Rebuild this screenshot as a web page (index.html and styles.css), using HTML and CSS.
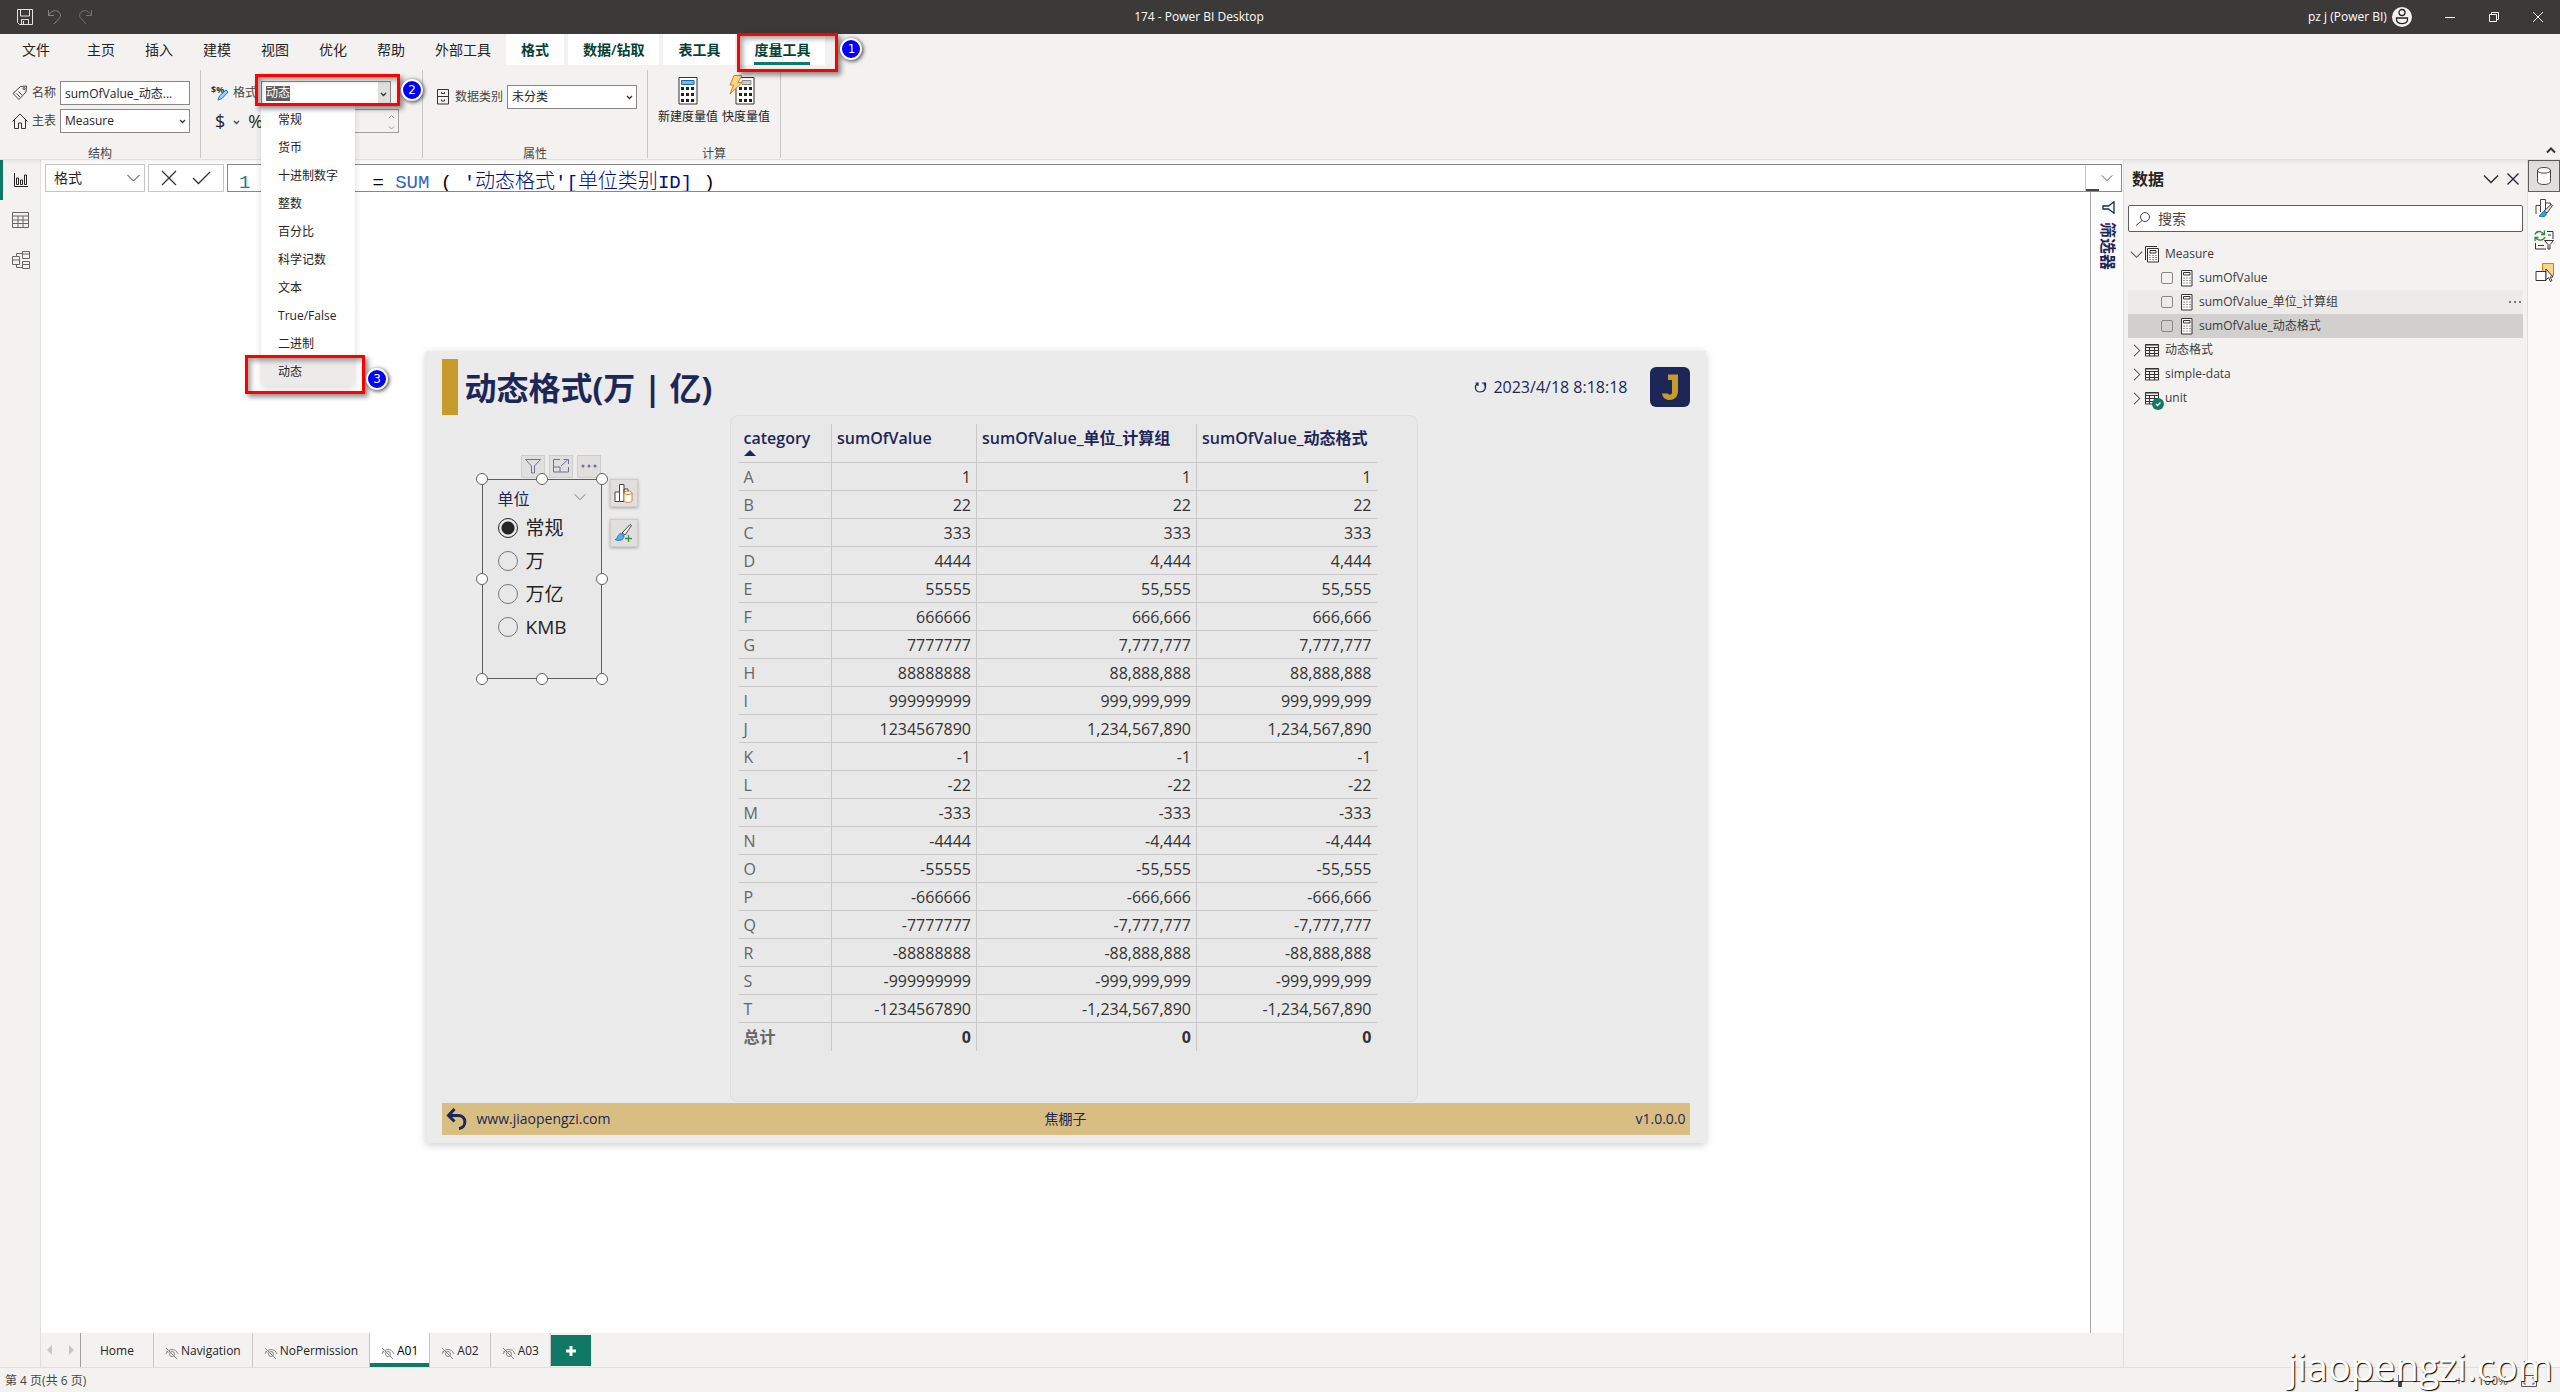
FILE: index.html
```html
<!DOCTYPE html>
<html lang="zh-CN">
<head>
<meta charset="utf-8">
<meta name="viewport" content="width=device-width, initial-scale=1">
<title>174 - Power BI Desktop</title>
<link rel="stylesheet" href="styles.css">
</head>
<body>
<svg class="defs" width="0" height="0" aria-hidden="true">
  <symbol id="chev-down" viewBox="0 0 16 16"><path d="M1 4.500l7 7 7-7" fill="none" stroke="currentColor" stroke-width="1.300"/></symbol>
  <symbol id="chev-right" viewBox="0 0 16 16"><path d="M5 1l7 7-7 7" fill="none" stroke="currentColor" stroke-width="1.300"/></symbol>
  <symbol id="calc" viewBox="0 0 12 17"><path d="M.5.5h10.500v15.500H.5z" fill="#fff" stroke="#333"/><path d="M2.500 2.500h6.500v2.500h-6.500z" fill="none" stroke="#333"/><path d="M2.500 8h7M2.500 10.500h7M2.500 13h7" stroke="#333" stroke-dasharray="1 2"/></symbol>
  <symbol id="grid" viewBox="0 0 14 14"><path d="M.5 1.500h13v11.500H.5zM.5 4.500h13M.5 7.500h13M.5 10.500h13M4.500 4.500V13M9.500 4.500V13" fill="none" stroke="#333"/><path d="M.5 2h13" stroke="#333"/></symbol>
  <symbol id="hidden" viewBox="0 0 14 14"><path d="M1 2l11 11M1 8c2-6 10-6 12 0M3 6.500L1.500 5" fill="none" stroke="#888"/><circle cx="7" cy="8" r="2.500" fill="none" stroke="#888"/></symbol>
</svg>

<header class="titlebar">
  <div class="quick">
    <button aria-label="保存"><svg width="16" height="16" viewBox="0 0 16 16" fill="none" stroke="#e4e4e4"><path d="M.5.5h15v15h-13l-2-2zM3.500.5v6.500h9V.5M4.500 15v-4.500h7V15M6.500 12v3"/></svg></button>
    <button aria-label="撤消"><svg width="16" height="16" viewBox="0 0 16 16" fill="none" stroke="#858482"><path d="M1.500 1v5.500h5.500M1.500 6.500C4 2 8 .5 11 2.500c3 2 3 5 1 7L7 15"/></svg></button>
    <button aria-label="恢复"><svg width="16" height="16" viewBox="0 0 16 16" fill="none" stroke="#737270"><path d="M14.500 1v5.500H9M14.500 6.500C12 2 8 .5 5 2.500c-3 2-3 5-1 7L9 15"/></svg></button>
  </div>
  <h1>174 - Power BI Desktop</h1>
  <div class="account">
    <span>pz j (Power BI)</span>
    <svg width="20" height="20" viewBox="0 0 20 20"><circle cx="10" cy="10" r="10" fill="#f3f2f1"/><g fill="none" stroke="#222" stroke-width="1.300"><circle cx="10" cy="5.500" r="3"/><path d="M4.500 11h11v1.500c0 5.500-11 5.500-11 0z"/></g></svg>
    <button aria-label="最小化"><svg width="12" height="12"><path d="M1 6.500h10" stroke="#fff"/></svg></button>
    <button aria-label="还原"><svg width="12" height="12" fill="none" stroke="#fff"><path d="M1.500 3.500h7v7h-7zM3.500 3.500v-2h7v7h-2"/></svg></button>
    <button aria-label="关闭"><svg width="12" height="12" stroke="#fff"><path d="M1 1l10 10M11 1L1 11"/></svg></button>
  </div>
</header>

<nav class="ribbon-tabs">
  <button class="file">文件</button><button>主页</button><button>插入</button><button>建模</button><button>视图</button><button>优化</button><button>帮助</button><button>外部工具</button>
  <div class="context-tabs">
    <button>格式</button><button>数据/钻取</button><button>表工具</button>
    <div class="anchor"><button class="current"><span>度量工具</span></button><i class="frame frame-tab"></i><b class="badge badge-tab">1</b></div>
  </div>
</nav>

<section class="ribbon">
  <div class="group g-structure">
    <div class="field"><svg width="16" height="16" viewBox="0 0 16 16" fill="none" stroke="#444"><path d="M1 8.500L8.500 1.500 14.500 1 14 7 7 14.500z"/><path d="M4.500 8.500l3.500 3.500M6.500 6.500L10 10"/><circle cx="12" cy="3.500" r="1"/></svg><label for="mname">名称</label><input id="mname" value="sumOfValue_动态..."></div>
    <div class="field"><svg width="16" height="16" viewBox="0 0 16 16" fill="none" stroke="#333"><path d="M.5 8.500L8 1l7.500 7.500M2.500 7v8.500h4V10h3v5.500h4V7"/></svg><label for="home">主表</label><select id="home"><option>Measure</option></select></div>
    <h2>结构</h2>
  </div>
  <div class="group g-format">
    <div class="field">
      <svg class="fmt-icon" width="18" height="18" viewBox="0 0 18 18"><text x="0" y="9" class="fmt-text">$%</text><path d="M7 16l1.500-4L15 6l2 2-6 6.500z" fill="#9fd0f5" stroke="#1277c4"/></svg>
      <label for="fmt">格式</label>
      <div class="anchor">
        <select id="fmt" class="picked"><option>动态</option></select>
        <ul class="menu" role="listbox" aria-label="格式">
          <li><button>常规</button></li><li><button>货币</button></li><li><button>十进制数字</button></li><li><button>整数</button></li><li><button>百分比</button></li><li><button>科学记数</button></li><li><button>文本</button></li><li><button>True/False</button></li><li><button>二进制</button></li><li class="anchor"><button class="on">动态</button><i class="frame frame-item"></i><b class="badge badge-item">3</b></li>
        </ul>
        <i class="frame frame-combo"></i><b class="badge badge-combo">2</b>
      </div>
    </div>
    <div class="field symbols"><button>$</button><svg width="7" height="7" viewBox="0 0 7 7"><path d="M1 2l2.500 2.500L6 2" fill="none" stroke="#444" stroke-width="1.300"/></svg><button>%</button>
      <div class="spin"><svg width="7" height="18" viewBox="0 0 7 18" fill="none" stroke="#999"><path d="M1 5l2.500-2.500L6 5M1 13.500L3.500 16 6 13.500"/></svg></div></div>
  </div>
  <div class="group g-props">
    <div class="field"><svg width="12" height="16" viewBox="0 0 12 16" fill="none" stroke="#333"><path d="M.5.5h11v14.500H.5zM.5 7.500h11M4.500 3v1.500h3V3M4.500 10.500V12h3v-1.500"/></svg><label for="cat">数据类别</label><select id="cat"><option>未分类</option></select></div>
    <h2>属性</h2>
  </div>
  <div class="group g-calc">
    <div class="tools">
      <button><svg width="20" height="30" viewBox="0 0 20 30"><path d="M1 2.500h18v26.500H1z" fill="#fff" stroke="#333"/><path d="M3.500 5.500h12.500v4H3.500z" fill="#75b9ee" stroke="#1267b0"/><path d="M3 13.500h13M3 19.500h13M3 25.500h13" stroke="#222" stroke-width="3" stroke-dasharray="3 2"/></svg>新建度量值</button>
      <button><svg width="34" height="30" viewBox="0 0 34 30"><path d="M7 2.500h18v26.500H7z" fill="#fff" stroke="#333"/><path d="M13 5.500h9v4h-9z" fill="#ccc" stroke="#888"/><path d="M10 13.500h13M10 19.500h13M10 25.500h13" stroke="#222" stroke-width="3" stroke-dasharray="3 2"/><path d="M5 .5h8l-4 7h4L1 19l3.500-9H1z" fill="#fbd68a" stroke="#e07b10"/></svg>快度量值</button>
    </div>
    <h2>计算</h2>
  </div>
  <button class="collapse" aria-label="折叠功能区"><svg width="10" height="8"><path d="M1 6.500l4-4 4 4" fill="none" stroke="#333" stroke-width="2"/></svg></button>
</section>

<main class="workspace">
  <nav class="views">
    <button class="active" aria-label="报表"><svg width="14" height="14" viewBox="0 0 14 14" fill="none" stroke="#222"><path d="M.5 0v13.500H14M2.500 5h2v6.500h-2zM6.500 7h2v4.500h-2zM10.500 2h2v9.500h-2z"/></svg></button>
    <button aria-label="数据"><svg width="17" height="16" viewBox="0 0 17 16" fill="none" stroke="#666"><path d="M.5.5h16v15H.5zM.5 4h16M.5 8h16M.5 11.500h16M6 4v11.500M11 4v11.500"/></svg></button>
    <button aria-label="模型"><svg width="18" height="18" viewBox="0 0 18 18" fill="none" stroke="#666"><path d="M.5 5.500h7v8h-7zM.5 9h7M10.500.5h7v7h-7zM10.500 3h7M10.500 10.500h7v7h-7zM10.500 13.500h7M4.500 5.500v-3h6M4.500 13.500v3h6"/></svg></button>
  </nav>

  <div class="center">
    <div class="formula-row">
      <select class="scope" aria-label="公式作用"><option>格式</option></select>
      <div class="commit"><button aria-label="取消"><svg width="16" height="16"><path d="M1 1l14 14M15 1L1 15" stroke="#333" stroke-width="1.300"/></svg></button><button aria-label="提交"><svg width="19" height="16"><path d="M1 8l5.500 5.500L18 2" fill="none" stroke="#333" stroke-width="1.300"/></svg></button></div>
      <div class="formula" role="textbox" aria-label="公式"><span class="ln">1</span><code> = <span class="fn">SUM</span> ( <span class="col">'<em>动态格式</em>'[<em>单位类别</em>ID]</span> )</code>
        <button class="expand" aria-label="展开"><svg width="12" height="12"><use href="#chev-down"/></svg></button></div>
    </div>
    <div class="stage">
      <div class="canvas">
        <article class="page">
          <header class="page-head">
            <h3>动态格式(万 | 亿)</h3>
            <span class="stamp"><svg width="14" height="14" viewBox="0 0 14 14" fill="none" stroke="#1d2757" stroke-width="1.200"><path d="M3.500 3.500C0 6 1 12 6 12s7-5 4-8.500M8 3h3.500v3.500M1.500 3h2.500v3"/></svg>2023/4/18 8:18:18</span>
            <svg class="logo" width="40" height="40" viewBox="0 0 40 40"><rect width="40" height="40" rx="6" fill="#1d2757"/><path d="M18 7.500h10V24c0 6-4 9-8.500 9-4 0-7-2.500-7.500-6.500h6c.3.800 1 1.200 1.800 1.200 1.300 0 2.200-.8 2.200-2.700V13h-4z" fill="#c79a2b"/></svg>
          </header>
          <div class="page-body">
            <section class="slicer">
              <div class="visual-bar"><button aria-label="筛选器"><svg width="18" height="16" viewBox="0 0 18 16" fill="none" stroke="#6b7094"><path d="M1.500 1.500h15l-6 6.500v7h-3V8z"/></svg></button><button aria-label="焦点模式"><svg width="16" height="14" viewBox="0 0 16 14" fill="none" stroke="#6b7094"><path d="M7 .5H.5v12.500h15V8M.5 8h6.500v5M8 7l6.500-6M10.500.5h5V5"/></svg></button><button aria-label="更多"><svg width="16" height="4" fill="#6b7094"><circle cx="2" cy="2" r="1.500"/><circle cx="8" cy="2" r="1.500"/><circle cx="14" cy="2" r="1.500"/></svg></button></div>
              <h4>单位<svg width="12" height="12"><use href="#chev-down"/></svg></h4>
              <label><input type="radio" name="unit" checked>常规</label>
              <label><input type="radio" name="unit">万</label>
              <label><input type="radio" name="unit">万亿</label>
              <label><input type="radio" name="unit">KMB</label>
              <i class="h tl"></i><i class="h tc"></i><i class="h tr"></i><i class="h ml"></i><i class="h mr"></i><i class="h bl"></i><i class="h bc"></i><i class="h br"></i>
            </section>
            <div class="visual-side">
              <button aria-label="生成视觉对象"><svg width="19" height="20" viewBox="0 0 19 20" fill="#fff" stroke="#444"><path d="M1 9h4.500v9.500H1zM5.500 1.500H10v17H5.500zM10 6h4v4h-4z"/><path d="M10 10c0-2.500 8-2.500 8 0v7.500c0 2.500-8 2.500-8 0z" stroke="#e07b20"/><path d="M10 10c0 2 8 2 8 0" fill="none" stroke="#e07b20"/></svg></button>
              <button aria-label="设置格式"><svg width="19" height="20" viewBox="0 0 19 20"><path d="M8 10l8-8.500 1.500 1-6.500 9.500z" fill="#fff" stroke="#444"/><path d="M1 16.500c3 0 2-5 6-6l3 2.500c0 4-5 5.500-9 3.500z" fill="#5ab0ee" stroke="#1277c4"/><path d="M14.500 12v7M11 15.500h7" stroke="#2b9a3e" stroke-width="1.300"/></svg></button>
            </div>
            <section class="card">
              <table>
                <colgroup><col class="c1"><col class="c2"><col class="c3"><col class="c4"></colgroup>
                <thead><tr><th>category<i class="sort"></i></th><th>sumOfValue</th><th>sumOfValue_单位_计算组</th><th>sumOfValue_动态格式</th></tr></thead>
                <tbody>
                <tr><td>A</td><td>1</td><td>1</td><td>1</td></tr>
                <tr><td>B</td><td>22</td><td>22</td><td>22</td></tr>
                <tr><td>C</td><td>333</td><td>333</td><td>333</td></tr>
                <tr><td>D</td><td>4444</td><td>4,444</td><td>4,444</td></tr>
                <tr><td>E</td><td>55555</td><td>55,555</td><td>55,555</td></tr>
                <tr><td>F</td><td>666666</td><td>666,666</td><td>666,666</td></tr>
                <tr><td>G</td><td>7777777</td><td>7,777,777</td><td>7,777,777</td></tr>
                <tr><td>H</td><td>88888888</td><td>88,888,888</td><td>88,888,888</td></tr>
                <tr><td>I</td><td>999999999</td><td>999,999,999</td><td>999,999,999</td></tr>
                <tr><td>J</td><td>1234567890</td><td>1,234,567,890</td><td>1,234,567,890</td></tr>
                <tr><td>K</td><td>-1</td><td>-1</td><td>-1</td></tr>
                <tr><td>L</td><td>-22</td><td>-22</td><td>-22</td></tr>
                <tr><td>M</td><td>-333</td><td>-333</td><td>-333</td></tr>
                <tr><td>N</td><td>-4444</td><td>-4,444</td><td>-4,444</td></tr>
                <tr><td>O</td><td>-55555</td><td>-55,555</td><td>-55,555</td></tr>
                <tr><td>P</td><td>-666666</td><td>-666,666</td><td>-666,666</td></tr>
                <tr><td>Q</td><td>-7777777</td><td>-7,777,777</td><td>-7,777,777</td></tr>
                <tr><td>R</td><td>-88888888</td><td>-88,888,888</td><td>-88,888,888</td></tr>
                <tr><td>S</td><td>-999999999</td><td>-999,999,999</td><td>-999,999,999</td></tr>
                <tr><td>T</td><td>-1234567890</td><td>-1,234,567,890</td><td>-1,234,567,890</td></tr>
                </tbody>
                <tfoot><tr><td>总计</td><td>0</td><td>0</td><td>0</td></tr></tfoot>
              </table>
            </section>
          </div>
          <footer class="page-foot">
            <div class="site"><svg width="22" height="24" viewBox="0 0 22 24"><path d="M3 8.500h9c9 0 9 12 1 13" fill="none" stroke="#1d2757" stroke-width="3"/><path d="M8.500 2L2.500 8.500l6 6" fill="none" stroke="#1d2757" stroke-width="3"/></svg><a href="#">www.jiaopengzi.com</a></div>
            <span>焦棚子</span>
            <span class="ver">v1.0.0.0</span>
          </footer>
        </article>
      </div>
      <aside class="filters"><svg width="13" height="13" viewBox="0 0 13 13"><path d="M12 .8v11.400L6.500 8H1V5h5.500z" fill="none" stroke="#1d2757" stroke-width="1.300"/></svg><span>筛选器</span></aside>
    </div>
    <nav class="sheets">
      <div class="arrows"><svg width="5" height="10"><path d="M5 0v10L0 5z" fill="#c8c6c4"/></svg><svg width="5" height="10"><path d="M0 0v10l5-5z" fill="#c8c6c4"/></svg></div>
      <button class="home">Home</button>
      <button><svg width="14" height="14"><use href="#hidden"/></svg>Navigation</button>
      <button><svg width="14" height="14"><use href="#hidden"/></svg>NoPermission</button>
      <button class="sel"><svg width="14" height="14"><use href="#hidden"/></svg>A01</button>
      <button><svg width="14" height="14"><use href="#hidden"/></svg>A02</button>
      <button><svg width="14" height="14"><use href="#hidden"/></svg>A03</button>
      <button class="add" aria-label="新建页"><svg width="12" height="12"><path d="M6 1v10M1 6h10" stroke="#fff" stroke-width="3"/></svg></button>
    </nav>
  </div>

  <aside class="data">
    <div class="data-head"><h2>数据</h2><button aria-label="折叠"><svg width="16" height="16"><use href="#chev-down"/></svg></button><button aria-label="关闭"><svg width="12" height="12"><path d="M.5.5l11 11M11.500.5l-11 11" stroke="#223" stroke-width="1.300"/></svg></button></div>
    <div class="search"><svg width="14" height="14" fill="none" stroke="#444"><circle cx="9" cy="5" r="4.500"/><path d="M6 8.500L0 13.500"/></svg><input type="search" placeholder="搜索" aria-label="搜索"></div>
    <ul class="tree">
      <li><svg class="tw" width="13" height="13"><use href="#chev-down"/></svg><svg class="ic" width="14" height="17" viewBox="0 0 14 17"><path d="M.5 14V.5H12" fill="none" stroke="#333"/><path d="M2.500 2.500h11v13.500h-11z" fill="#fff" stroke="#333"/><path d="M5 4.500h6v2.500H5z" fill="none" stroke="#333"/><path d="M4.500 9.500h8M4.500 11.500h8M4.500 13.500h8" stroke="#333" stroke-dasharray="1 2"/></svg>Measure</li>
      <li class="leaf"><label><input type="checkbox"><svg width="12" height="17"><use href="#calc"/></svg>sumOfValue</label></li>
      <li class="leaf hover"><label><input type="checkbox"><svg width="12" height="17"><use href="#calc"/></svg>sumOfValue_单位_计算组</label><button class="more" aria-label="更多"><svg width="12" height="2" fill="#777"><path d="M0 0h2v2H0zM5 0h2v2H5zM10 0h2v2h-2z"/></svg></button></li>
      <li class="leaf chosen"><label><input type="checkbox"><svg width="12" height="17"><use href="#calc"/></svg>sumOfValue_动态格式</label></li>
      <li><svg class="tw" width="13" height="13"><use href="#chev-right"/></svg><svg class="ic" width="14" height="14"><use href="#grid"/></svg>动态格式</li>
      <li><svg class="tw" width="13" height="13"><use href="#chev-right"/></svg><svg class="ic" width="14" height="14"><use href="#grid"/></svg>simple-data</li>
      <li><svg class="tw" width="13" height="13"><use href="#chev-right"/></svg><span class="anchor ic"><svg width="14" height="14"><use href="#grid"/></svg><svg class="tick" width="12" height="12"><circle cx="6" cy="6" r="6" fill="#117865"/><path d="M4 6l1.500 1.500L8.500 4.500" fill="none" stroke="#fff" stroke-width="1.300"/></svg></span>unit</li>
    </ul>
  </aside>

  <nav class="panes">
    <button class="active" aria-label="数据"><svg width="14" height="18" viewBox="0 0 14 18" fill="#fff" stroke="#444"><path d="M.5 3.500c0-4 13-4 13 0v11c0 4-13 4-13 0z"/><path d="M.5 3.500c0 3.500 13 3.500 13 0" fill="none"/></svg></button>
    <button aria-label="格式"><svg width="18" height="20" viewBox="0 0 18 20"><path d="M1 16V7.500h4.500V1.500h5V12M5.500 7.500V14M10.500 5h5v3" fill="#fff" stroke="#444"/><path d="M9 13l7-6.500 1.500 1L12 15z" fill="#ddd" stroke="#444"/><path d="M4 18c2.500 0 2-4 5-4.500l2.500 2c0 3-4 4-7.500 2.500z" fill="#3b9be6" stroke="#1277c4"/></svg></button>
    <button aria-label="同步切片器"><svg width="20" height="20" viewBox="0 0 20 20" fill="none"><path d="M1 4.500C2.500.5 8 .5 10 4.500M10.500.5v4H7M11 7c-1.500 4-7.500 4-9.500.5M1 11V7.500h3.500" stroke="#2b8a3e" stroke-width="1.300"/><path d="M13 1.500h6V9M14 5h3M1.500 13v6H12M4 15.500h6M10.500 10.500h9L16 14.500V19h-2v-4.500z" stroke="#333"/></svg></button>
    <button aria-label="选择"><svg width="19" height="20" viewBox="0 0 19 20"><path d="M7.500 1.500h11v12h-11z" fill="#fbd68a" stroke="#e07b10"/><path d="M1 9.500h10v9H1z" fill="#fff" stroke="#333"/><path d="M11 7v11l2.500-2.500 2 4 1.500-1-2-3.500H18z" fill="#fff" stroke="#333"/></svg></button>
  </nav>
</main>

<footer class="status"><span>第 4 页(共 6 页)</span>
  <div class="zoom"><button aria-label="缩小">-</button><input type="range" min="0" max="100" value="50" aria-label="缩放"><button aria-label="放大">+</button><span>100%</span><svg width="16" height="12" viewBox="0 0 16 12" fill="none" stroke="#555"><path d="M.5.5h15v11H.5zM3 4.500V3h2M11 3h2v1.500M13 7.500V9h-2M5 9H3V7.500"/></svg></div>
  <div class="watermark">jiaopengzi.com</div>
</footer>
</body>
</html>
```
FILE: styles.css
```css
* { box-sizing: border-box; }
body {
  margin: 0;
  min-height: 100vh;
  display: flex;
  flex-direction: column;
  background: #f3f2f1;
  color: #252423;
  font: 12px/16px "Open Sans", "Noto Sans", "Noto Sans CJK SC", sans-serif;
}
h1, h2, h3, h4, ul { margin: 0; padding: 0; font-weight: 400; font-size: inherit; }
ul { list-style: none; }
button { margin: 0; padding: 0; border: 0; background: none; color: inherit; font: inherit; display: flex; align-items: center; justify-content: center; white-space: nowrap; }
input, select { margin: 0; font: inherit; color: inherit; border-radius: 0; }
svg { display: block; flex: none; }
.defs { position: absolute; }
.anchor { position: relative; }

/* title bar */
.titlebar { height: 34px; background: #3b3a38; color: #fff; display: flex; align-items: center; }
.quick { width: 98px; display: flex; gap: 14px; padding-left: 17px; }
.titlebar h1 { flex: 1; text-align: center; }
.account { width: 260px; display: flex; align-items: center; padding-left: 8px; }
.account > svg { margin: 0 16px 0 auto; }
.account button { width: 44px; height: 34px; }

/* ribbon tabs */
.ribbon-tabs { height: 32px; display: flex; font-size: 14px; }
.ribbon-tabs button { height: 31px; padding: 0 15px; }
.ribbon-tabs .file { padding: 0 22px; }
.context-tabs { display: flex; gap: 4px; }
.context-tabs button { background: #fff; color: #063f35; font-weight: 600; }
.current span { height: 31px; line-height: 31px; box-shadow: inset 0 -3px #117865; }

/* annotation frames and numbers */
.frame { position: absolute; z-index: 6; border: 3px solid #f00; box-shadow: 3px 3px 5px rgba(0,0,0,.45), inset 3px 3px 5px rgba(0,0,0,.35); pointer-events: none; }
.frame-tab { left: -2px; top: -1px; width: 101px; height: 39px; }
.frame-combo { left: -6px; top: -7px; width: 145px; height: 32px; }
.frame-item { left: -16px; top: -3px; width: 120px; height: 39px; }
.badge { position: absolute; z-index: 7; width: 22px; height: 22px; border: 2px solid #fff; border-radius: 50%; background: #00f; color: #fff; font: 12px/18px "DejaVu Sans", sans-serif; text-align: center; box-shadow: 1px 1px 4px rgba(0,0,0,.8); }
.badge-tab { left: 101px; top: 4px; }
.badge-combo { left: 140px; top: -2px; }
.badge-item { left: 105px; top: 10px; }

/* ribbon */
.ribbon { display: flex; align-items: flex-start; height: 94px; padding-top: 4px; border-bottom: 1px solid #e1dfdd; position: relative; z-index: 3; box-shadow: 0 2px 4px rgba(0,0,0,.06); }
.group { height: 88px; border-right: 1px solid #c8c6c4; display: flex; flex-direction: column; gap: 4px; padding-top: 11px; }
.group h2 { margin: auto 0 -2px; line-height: 12px; text-align: center; color: #484644; }
.field { display: flex; align-items: center; gap: 4px; height: 24px; }
.field label { white-space: nowrap; color: #484644; }
.field input, .field select { width: 130px; height: 24px; padding: 0 4px; border: 1px solid #8a8886; background-color: #fff; display: block; }
select { appearance: none; background: #fff url("data:image/svg+xml,%3Csvg xmlns='http://www.w3.org/2000/svg' width='7' height='7'%3E%3Cpath d='M1 2l2.500 2.500L6 2' fill='none' stroke='%23333' stroke-width='1.300'/%3E%3C/svg%3E") no-repeat right 3px center; }
.g-structure { width: 201px; }
.g-structure .field { padding-left: 12px; }
.g-format { width: 222px; padding-left: 10px; padding-right: 23px; }
.fmt-text { font: bold 9px "Open Sans", sans-serif; fill: #333; }
.field .picked { color: #fff; background-image: linear-gradient(#605e5c, #605e5c), url("data:image/svg+xml,%3Csvg xmlns='http://www.w3.org/2000/svg' width='12' height='24'%3E%3Crect width='12' height='24' fill='%23e1dfdd'/%3E%3Cpath d='M3 11l2.500 2.500L8 11' fill='none' stroke='%23333' stroke-width='1.300'/%3E%3C/svg%3E"); background-size: 24px 15px, 12px 24px; background-position: 4px 4px, right top; background-repeat: no-repeat; }
.symbols { gap: 8px; padding-left: 4px; }
.symbols button { font-size: 18px; }
.symbols svg { margin: 3px 0 0; }
.symbols .spin { margin-left: auto; width: 110px; height: 24px; border: 1px solid #a19f9d; display: flex; justify-content: flex-end; padding-right: 3px; }
.menu { position: absolute; z-index: 5; left: 0; top: 25px; width: 94px; background: #fff; border-radius: 0 0 4px 4px; box-shadow: 0 2px 6px rgba(0,0,0,.15); }
.menu button { width: 100%; height: 28px; justify-content: flex-start; padding-left: 17px; }
.menu .on { background: #edebe9; border-radius: 0 0 4px 4px; }
.g-props { width: 225px; padding-top: 15px; padding-left: 14px; }
.g-props .field svg { margin-right: 2px; }
.g-props h2 { padding-right: 14px; }
.g-calc { width: 133px; padding-top: 5px; }
.tools { display: flex; gap: 4px; padding-left: 10px; }
.tools button { flex-direction: column; gap: 4px; }
.collapse { margin: 76px 4px 0 auto; }

/* workspace */
.workspace { flex: 1; display: flex; }
.views { width: 41px; border-right: 1px solid #e1dfdd; }
.views button { width: 40px; height: 40px; border-left: 3px solid transparent; padding-right: 2px; }
.views .active { border-left-color: #117865; }
.center { flex: 1; min-width: 0; display: flex; flex-direction: column; background: #fff; }
.formula-row { display: flex; gap: 3px; padding: 4px 1px 0 4px; height: 32px; }
.scope { width: 100px; height: 28px; padding: 0 8px; border: 1px solid #c8c6c4; font-size: 14px; background-image: url("data:image/svg+xml,%3Csvg xmlns='http://www.w3.org/2000/svg' width='13' height='8'%3E%3Cpath d='M.5 1l6 6 6-6' fill='none' stroke='%23333'/%3E%3C/svg%3E"); background-position: right 4px center; }
.commit { width: 76px; height: 28px; border: 1px solid #c8c6c4; display: flex; align-items: center; justify-content: center; gap: 15px; }
.formula { flex: 1; height: 28px; border: 1px solid #8a8886; overflow: hidden; display: flex; font: 19px/36px "Liberation Mono", "Noto Sans CJK SC", monospace; }
.ln { width: 133px; padding-left: 11px; color: #237893; }
.formula code { font: inherit; white-space: pre; color: #000; }
.fn { color: #3165bb; }
.col { color: #001080; }
.col em { font-style: normal; font-size: 20px; font-weight: 300; }
.expand { margin-left: auto; width: 36px; height: 26px; padding-left: 6px; border-left: 1px solid #c8c6c4; background: linear-gradient(#484644, #484644) left bottom / 13px 2px no-repeat; color: #555; }

.stage { flex: 1; display: flex; }
.canvas { flex: 1; display: flex; align-items: center; justify-content: center; padding-bottom: 32px; }
.filters { width: 33px; border-left: 1px solid #a9a9a9; background: #fcfcfc; display: flex; flex-direction: column; align-items: center; gap: 8px; padding: 9px 0 0 2px; color: #1d2757; }
.filters span { writing-mode: vertical-rl; text-orientation: sideways; font-size: 16px; line-height: 20px; font-weight: 700; }

/* report page */
.page { width: 100%; max-width: 1280px; padding: 8px 16px; background: #ebebeb; box-shadow: 0 2px 8px rgba(0,0,0,.2); color: #1d2757; }
.page-head { display: flex; align-items: center; height: 56px; border-left: 16px solid #c79a2b; padding-left: 7px; }
.page-head h3 { flex: 1; padding-top: 2px; font-size: 32px; line-height: 48px; font-weight: 700; }
.stamp { display: flex; align-items: center; gap: 5px; font-size: 16px; line-height: 24px; margin-right: 22px; }
.page-body { display: flex; align-items: flex-start; min-height: 688px; padding-left: 40px; }
.slicer { position: relative; width: 120px; height: 200px; margin-top: 64px; padding: 9px 15px; border: 1px solid #605e5c; background: #e8e8e8; }
.slicer h4 { display: flex; justify-content: space-between; margin-bottom: 3px; font-size: 16px; line-height: 20px; }
.slicer h4 svg { color: #777; margin: 2px 0 0; }
.slicer label { display: flex; align-items: center; gap: 8px; height: 33px; font-size: 19px; color: #252423; }
.slicer input { appearance: none; width: 20px; height: 20px; border: 1px solid #777; border-radius: 50%; }
.slicer input:checked { border-color: #252423; background: radial-gradient(circle, #252423 6px, transparent 7px); }
.visual-bar { position: absolute; right: 0; top: -25px; display: flex; gap: 4px; }
.visual-bar button { width: 24px; height: 23px; background: #e1dfdd; border: 1px solid #d0cecc; }
.h { position: absolute; width: 12px; height: 12px; border: 1px solid #605e5c; border-radius: 50%; background: #fff; }
.tl, .ml, .bl { left: -7px; }
.tc, .bc { left: 53px; }
.tr, .mr, .br { right: -7px; }
.tl, .tc, .tr { top: -7px; }
.ml, .mr { top: 93px; }
.bl, .bc, .br { bottom: -7px; }
.visual-side { display: flex; flex-direction: column; gap: 12px; margin: 64px 0 0 8px; }
.visual-side button { width: 28px; height: 28px; background: #e1dfdd; border: 1px solid #d0cecc; box-shadow: 0 1px 3px rgba(0,0,0,.3); }
.card { width: 688px; height: 687px; margin-left: 92px; padding: 8px; border: 1px solid #dedede; border-radius: 8px; background: #e8e8e8; }
table { width: 638px; table-layout: fixed; border-collapse: collapse; font-size: 16px; line-height: 20px; }
.c1 { width: 93px; } .c2 { width: 145px; } .c3 { width: 220px; } .c4 { width: 180px; }
th { position: relative; height: 39px; padding: 2px 5px 0; text-align: left; vertical-align: top; line-height: 24px; font-weight: 600; white-space: nowrap; color: #1d2757; border-right: 1px solid #c8c8c8; border-bottom: 1px solid #c8c8c8; }
td { height: 28px; padding: 0 5px; text-align: right; color: #333; border-right: 1px solid #c8c8c8; border-bottom: 1px solid #c8c8c8; }
td:first-child { text-align: left; color: #666; }
th:last-child, td:last-child { border-right: 0; }
tfoot td { border-bottom: 0; font-weight: 700; }
.sort { position: absolute; left: 5px; bottom: 6px; border: 6px solid transparent; border-top: 0; border-bottom: 6px solid #1d2757; }
.page-foot { display: grid; grid-template-columns: 1fr auto 1fr; align-items: center; height: 32px; padding: 0 4px; background: #d8be82; font-size: 14px; }
.site { display: flex; align-items: center; gap: 9px; }
.site a { color: inherit; text-decoration: none; }
.ver { text-align: right; }

/* page tabs */
.sheets { height: 34px; display: flex; background: #f3f2f1; }
.sheets > button { padding: 2px 11px 0; gap: 2px; border-right: 1px solid #c8c6c4; }
.sheets > button svg { margin-top: 4px; }
.sheets .home { padding: 2px 19px 0; }
.sheets .sel { background: #fff; color: #000; box-shadow: inset 0 -4px #117865; }
.sheets .add { width: 40px; padding: 0; border: 0; background: #117865; margin: 2px 0 1px; }
.sheets .add svg { margin: 0; }
.arrows { width: 40px; border-right: 1px solid #a19f9d; display: flex; align-items: center; justify-content: center; gap: 17px; }

/* data pane */
.data { width: 404px; border-left: 1px solid #e1dfdd; padding: 0 4px 0 4px; }
.data-head { display: flex; align-items: center; gap: 16px; height: 38px; padding: 0 4px 0 4px; }
.data-head h2 { flex: 1; font-size: 16px; font-weight: 700; }
.data-head button + button { margin-left: -8px; }
.search { display: flex; align-items: center; gap: 8px; height: 27px; margin: 7px 0 10px; padding: 0 7px; background: #fff; border: 1px solid #605e5c; border-radius: 2px; }
.search input { flex: 1; border: 0; padding: 0; outline: 0; background: none; font-size: 14px; }
.search input::placeholder { color: #484644; }
.tree { color: #3b3a39; }
.tree li { display: flex; align-items: center; height: 24px; padding-left: 2px; }
.tree .tw { color: #555; margin-right: 2px; }
.tree .ic { margin-right: 6px; }
.tree .leaf { padding-left: 33px; }
.leaf label { display: flex; align-items: center; }
.leaf label svg { margin: 0 6px 0 8px; }
.leaf input { appearance: none; width: 12px; height: 12px; border: 1px solid #8a8886; border-radius: 2px; }
.hover { background: #edebe9; }
.chosen { background: #d2d0ce; }
.more { margin: 0 2px 0 auto; }
.tick { position: absolute; left: 7px; top: 7px; }
.panes { width: 33px; border-left: 1px solid #e1dfdd; background: #faf9f8; }
.panes button { width: 32px; height: 32px; }
.panes .active { background: #e1dfdd; border: 1px solid #605e5c; }

/* status bar */
.status { position: relative; display: flex; align-items: center; justify-content: space-between; height: 25px; padding: 2px 23px 0 5px; border-top: 1px solid #e1dfdd; color: #484644; }
.zoom { display: flex; align-items: center; gap: 5px; }
.zoom span { margin: 0 8px 0 10px; }
.zoom input { appearance: none; width: 102px; height: 12px; background: linear-gradient(#605e5c, #605e5c) center / 100% 1px no-repeat; }
.zoom input::-webkit-slider-thumb { appearance: none; width: 4px; height: 12px; background: #484644; }
.watermark { position: absolute; right: 7px; bottom: 2px; color: #fff; font-size: 38px; line-height: 48px; text-shadow: 1px 1px 1px #000; }
```
